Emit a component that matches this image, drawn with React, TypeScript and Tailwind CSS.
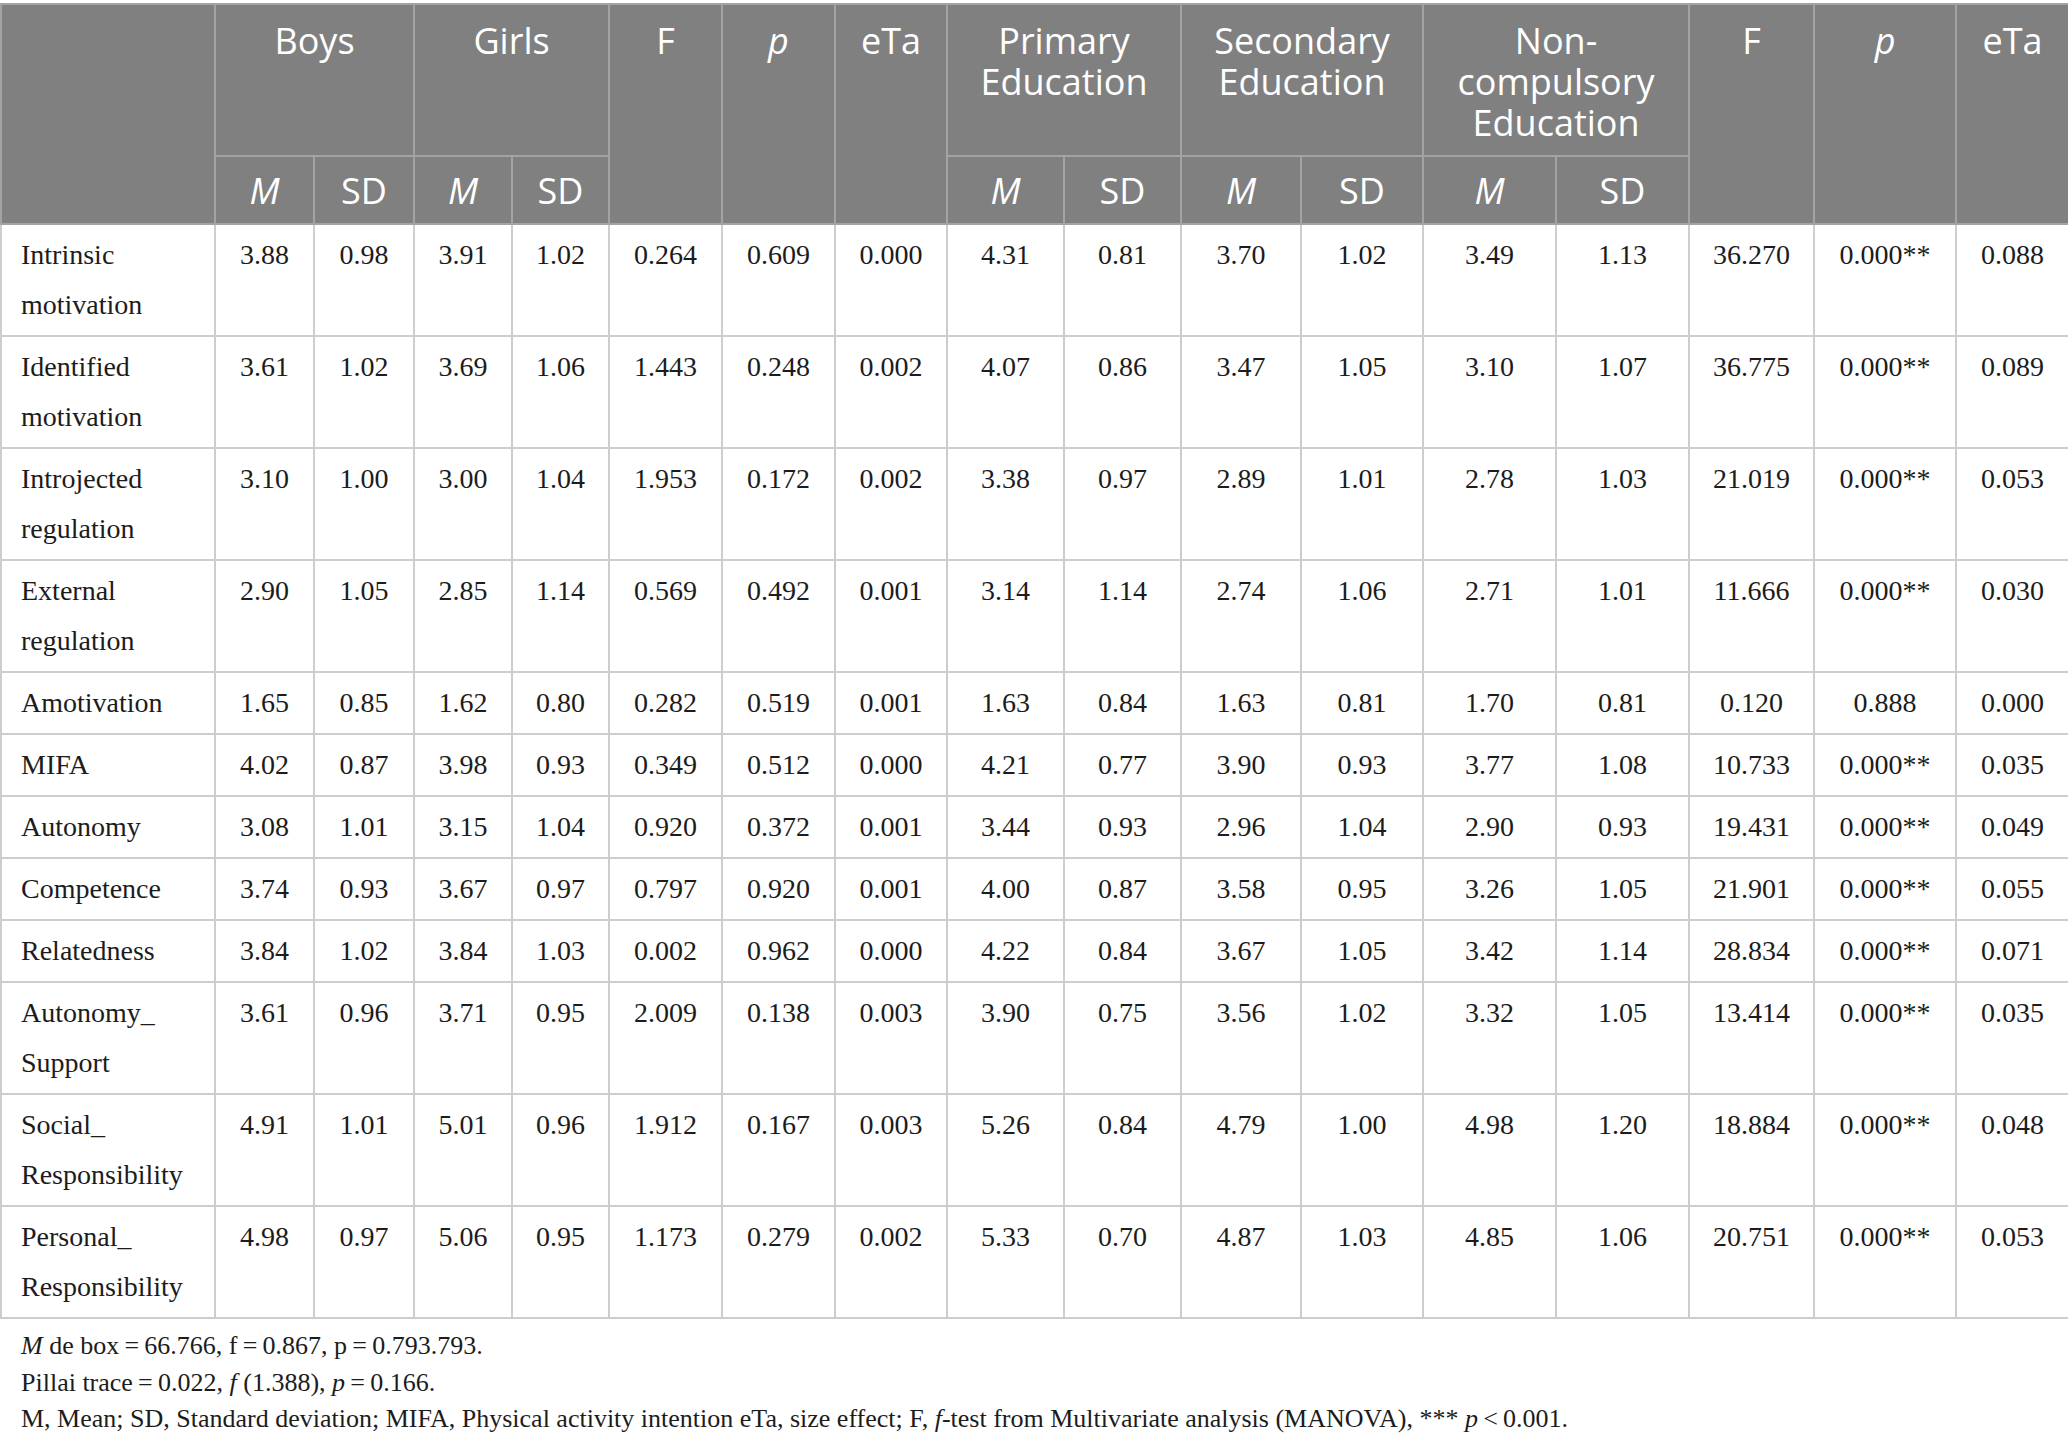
const rows: string[][] = [
  ["Intrinsic\nmotivation", "3.88", "0.98", "3.91", "1.02", "0.264", "0.609", "0.000", "4.31", "0.81", "3.70", "1.02", "3.49", "1.13", "36.270", "0.000**", "0.088"],
  ["Identified\nmotivation", "3.61", "1.02", "3.69", "1.06", "1.443", "0.248", "0.002", "4.07", "0.86", "3.47", "1.05", "3.10", "1.07", "36.775", "0.000**", "0.089"],
  ["Introjected\nregulation", "3.10", "1.00", "3.00", "1.04", "1.953", "0.172", "0.002", "3.38", "0.97", "2.89", "1.01", "2.78", "1.03", "21.019", "0.000**", "0.053"],
  ["External\nregulation", "2.90", "1.05", "2.85", "1.14", "0.569", "0.492", "0.001", "3.14", "1.14", "2.74", "1.06", "2.71", "1.01", "11.666", "0.000**", "0.030"],
  ["Amotivation", "1.65", "0.85", "1.62", "0.80", "0.282", "0.519", "0.001", "1.63", "0.84", "1.63", "0.81", "1.70", "0.81", "0.120", "0.888", "0.000"],
  ["MIFA", "4.02", "0.87", "3.98", "0.93", "0.349", "0.512", "0.000", "4.21", "0.77", "3.90", "0.93", "3.77", "1.08", "10.733", "0.000**", "0.035"],
  ["Autonomy", "3.08", "1.01", "3.15", "1.04", "0.920", "0.372", "0.001", "3.44", "0.93", "2.96", "1.04", "2.90", "0.93", "19.431", "0.000**", "0.049"],
  ["Competence", "3.74", "0.93", "3.67", "0.97", "0.797", "0.920", "0.001", "4.00", "0.87", "3.58", "0.95", "3.26", "1.05", "21.901", "0.000**", "0.055"],
  ["Relatedness", "3.84", "1.02", "3.84", "1.03", "0.002", "0.962", "0.000", "4.22", "0.84", "3.67", "1.05", "3.42", "1.14", "28.834", "0.000**", "0.071"],
  ["Autonomy_\nSupport", "3.61", "0.96", "3.71", "0.95", "2.009", "0.138", "0.003", "3.90", "0.75", "3.56", "1.02", "3.32", "1.05", "13.414", "0.000**", "0.035"],
  ["Social_\nResponsibility", "4.91", "1.01", "5.01", "0.96", "1.912", "0.167", "0.003", "5.26", "0.84", "4.79", "1.00", "4.98", "1.20", "18.884", "0.000**", "0.048"],
  ["Personal_\nResponsibility", "4.98", "0.97", "5.06", "0.95", "1.173", "0.279", "0.002", "5.33", "0.70", "4.87", "1.03", "4.85", "1.06", "20.751", "0.000**", "0.053"],
];

const colWidths = [214, 99, 100, 98, 97, 113, 113, 112, 117, 117, 120, 122, 133, 133, 125, 142, 113];

// header cell styles
const hTop = "border-2 border-[#a3a3a3] align-top pt-[15px] px-1 font-normal";
const hSub = "border-2 border-[#a3a3a3] align-middle font-normal";

export default function App() {
  return (
    <div className="w-[2068px] min-h-[1443px] bg-white pt-[3px]">
      <table className="w-[2068px] table-fixed border-collapse">
        <colgroup>
          {colWidths.map((w, i) => (
            <col key={i} style={{ width: w }} />
          ))}
        </colgroup>
        <thead className="bg-[#808080] text-white text-[36px] leading-[41px] font-['Open_Sans',sans-serif]">
          <tr className="h-[152px]">
            <th rowSpan={2} className={hTop}></th>
            <th colSpan={2} className={hTop}>Boys</th>
            <th colSpan={2} className={hTop}>Girls</th>
            <th rowSpan={2} className={hTop}>F</th>
            <th rowSpan={2} className={`${hTop} italic`}>p</th>
            <th rowSpan={2} className={hTop}>eTa</th>
            <th colSpan={2} className={hTop}>Primary<br />Education</th>
            <th colSpan={2} className={hTop}>Secondary<br />Education</th>
            <th colSpan={2} className={hTop}>Non-<br />compulsory<br />Education</th>
            <th rowSpan={2} className={hTop}>F</th>
            <th rowSpan={2} className={`${hTop} italic`}>p</th>
            <th rowSpan={2} className={hTop}>eTa</th>
          </tr>
          <tr className="h-[68px]">
            <th className={`${hSub} italic`}>M</th>
            <th className={hSub}>SD</th>
            <th className={`${hSub} italic`}>M</th>
            <th className={hSub}>SD</th>
            <th className={`${hSub} italic`}>M</th>
            <th className={hSub}>SD</th>
            <th className={`${hSub} italic`}>M</th>
            <th className={hSub}>SD</th>
            <th className={`${hSub} italic`}>M</th>
            <th className={hSub}>SD</th>
          </tr>
        </thead>
        <tbody className="text-[#1c1c1c] text-[28px] leading-[50px] font-['Liberation_Serif','Times_New_Roman',serif]">
          {rows.map((r) => (
            <tr key={r[0]}>
              {r.map((v, i) =>
                i === 0 ? (
                  <td key={i} className="border-2 border-[#cdcdcd] align-top py-[5px] pl-[19px] pr-1 whitespace-pre-line">
                    {v}
                  </td>
                ) : (
                  <td key={i} className="border-2 border-[#cdcdcd] align-top py-[5px] text-center whitespace-nowrap">
                    {v}
                  </td>
                )
              )}
            </tr>
          ))}
        </tbody>
      </table>

      <div className="pl-[21px] pt-[9px] text-[26px] leading-[36.5px] text-[#1c1c1c] font-['Liberation_Serif','Times_New_Roman',serif]">
        <p>
          <i>M</i> de box{"\u2009=\u2009"}66.766, f{"\u2009=\u2009"}0.867, p{"\u2009=\u2009"}0.793.793.
        </p>
        <p>
          Pillai trace{"\u2009=\u2009"}0.022, <i>f</i> (1.388), <i>p</i>{"\u2009=\u2009"}0.166.
        </p>
        <p>
          M, Mean; SD, Standard deviation; MIFA, Physical activity intention eTa, size effect; F, <i>f</i>-test from
          Multivariate analysis (MANOVA), *** <i>p</i>{"\u2009<\u2009"}0.001.
        </p>
      </div>
    </div>
  );
}
